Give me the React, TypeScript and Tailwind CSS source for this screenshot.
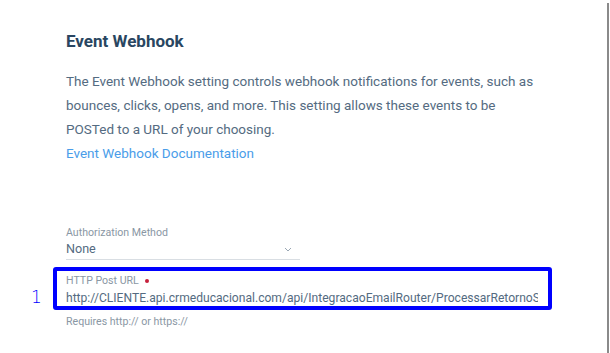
export default function App() {
  return (
    <div className="relative h-[353px] w-[610px] overflow-hidden bg-white font-['Roboto',sans-serif]">
      {/* grey scrollbar edge on the right */}
      <div className="absolute right-[1px] top-[3px] bottom-0 w-[2px] bg-[#8a8a8a]" />

      <div className="pl-[66px] pt-[29px]">
        <h2 className="text-[17px] font-bold leading-[24px] text-[#294661]">Event Webhook</h2>

        <p className="mt-[16px] w-[472px] text-[13.5px] leading-[24px] text-[#546b81]">
          The Event Webhook setting controls webhook notifications for events, such as bounces, clicks,
          opens, and more. This setting allows these events to be POSTed to a URL of your choosing.
        </p>
        <a className="block text-[13.5px] leading-[24px] text-[#4a9de9]">Event Webhook Documentation</a>

        <div className="mt-[61px] w-[234px]">
          <div className="text-[10.6px] leading-[14px] text-[#8a97a4]">Authorization Method</div>
          <div className="flex h-[20px] items-center justify-between border-b border-[#d9dee3] pr-[8px]">
            <span className="text-[12.6px] text-[#546b81]">None</span>
            <svg width="8" height="5" viewBox="0 0 8 5" fill="none">
              <path d="M1 1l3 3 3-3" stroke="#9aa7b4" strokeWidth="1" />
            </svg>
          </div>
        </div>

        <div className="relative mt-[8px]">
          <div className="absolute -left-[13px] -top-[1px] h-[43px] w-[499px] rounded-[3px] border-[4px] border-[#0000ff]" />
          <div className="absolute -left-[35px] top-[19px] text-[17px] leading-[20px] text-[#0000ff] font-['DejaVu_Sans',sans-serif] font-light">1</div>
          <div className="pt-[6px]">
            <div className="flex items-center gap-[6px] text-[10.6px] leading-[14px] text-[#8a97a4]">
              HTTP Post URL
              <span className="h-[4px] w-[4px] rounded-full bg-[#c6203c]" />
            </div>
            <div className="w-[472px] overflow-hidden whitespace-nowrap text-[12.1px] leading-[20px] text-[#546b81]">
              http://CLIENTE.api.crmeducacional.com/api/IntegracaoEmailRouter/ProcessarRetornoSendGrid
            </div>
          </div>
          <div className="mt-[7px] text-[10.6px] leading-[14px] text-[#8a97a4]">Requires http:// or https://</div>
        </div>
      </div>
    </div>
  );
}
